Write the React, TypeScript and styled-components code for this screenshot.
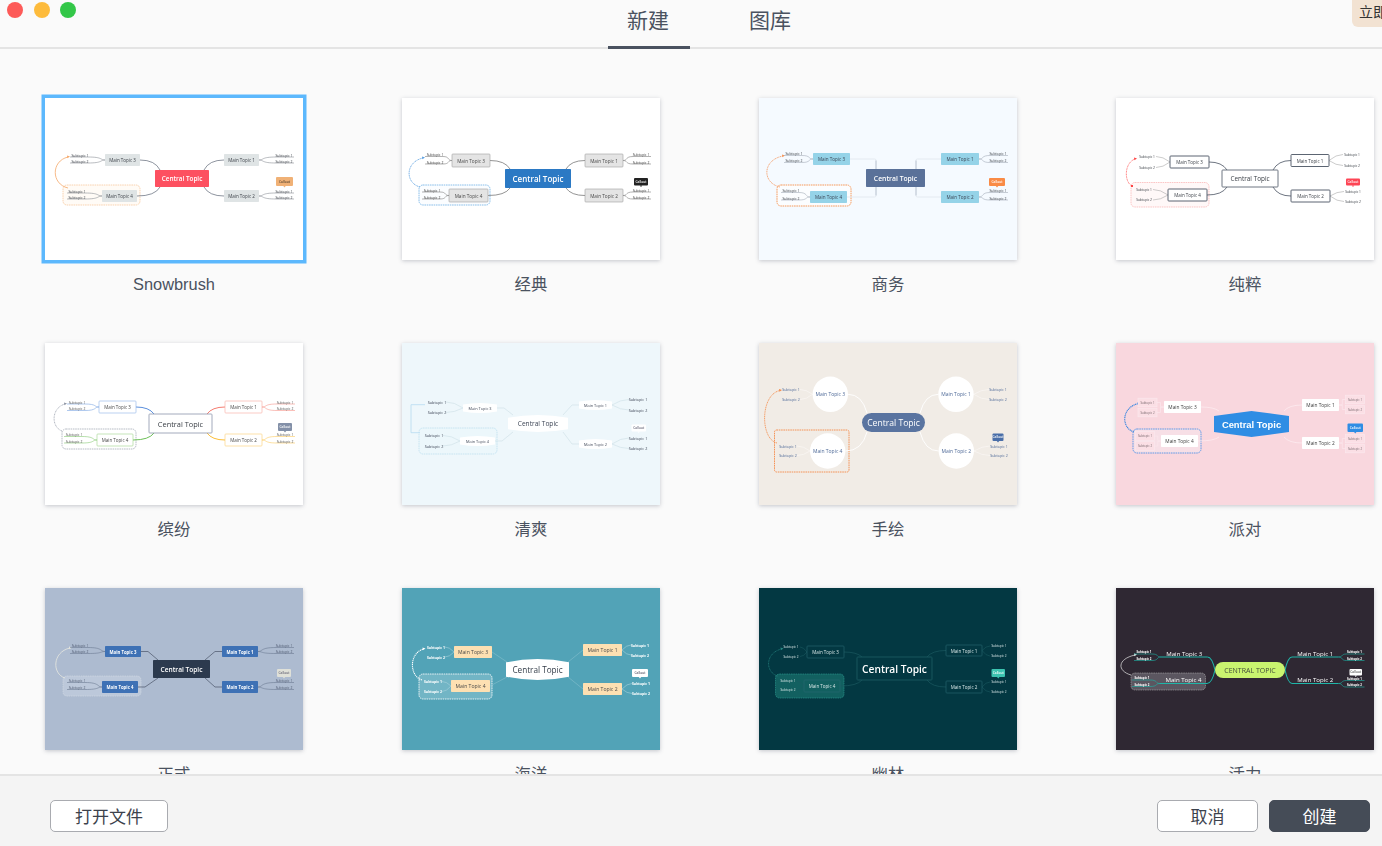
import * as React from 'react';
import styled, { createGlobalStyle } from 'styled-components';

type Box = [number, number, number, number];
type Paint = string | string[];
type ShapeKind = 'rect' | 'pill' | 'lens' | 'hex' | 'circle' | 'underline';
type BranchKind = 'curve' | 'elbow' | 'angular' | 'straight' | 'sweep';
type SubKind = 'line' | 'plain' | 'box';

interface MapTheme {
  name: string;
  bg: string;
  selected?: boolean;
  label?: string;
  central: Box;
  centralShape: ShapeKind;
  centralFill: string;
  centralStroke?: string;
  centralColor: string;
  centralSize: number;
  centralWeight?: number;
  centralFont?: string;
  mains: Box[];
  mainShape: ShapeKind;
  mainFill: string;
  mainStroke?: Paint;
  mainStrokeWidth?: number;
  mainColor: string;
  mainSize: number;
  mainWeight?: number;
  branch: BranchKind;
  branchColor: Paint;
  branchAccent?: string;
  branchWidth: number;
  subKind: SubKind;
  subX: number[];
  subY: number[][];
  subColor: string;
  subLine: Paint;
  subSize: number;
  subWeight?: number;
  subFill?: string;
  callout: Box;
  calloutFill: string;
  calloutColor: string;
  frame: Box;
  frameFill: string;
  frameStroke: string;
  frameWidth: number;
  rel: number[];
  relColor: string;
  relWidth: number;
  relDash?: string;
  relDot?: boolean;
}

const SANS = '"Open Sans", "Noto Sans", sans-serif';

const themes: MapTheme[] = [
  {
    name: 'Snowbrush', bg: '#fff', selected: true,
    central: [110, 72, 164, 89], centralShape: 'rect', centralFill: '#fd5060', centralColor: '#fff', centralSize: 6.4, centralWeight: 600,
    mains: [[179, 56, 214, 68], [179, 92, 214, 104], [60, 56, 95, 68], [57, 92, 92, 104]],
    mainShape: 'rect', mainFill: '#dfe4e5', mainColor: '#3c4148', mainSize: 4.5,
    branch: 'curve', branchColor: '#5d6675', branchWidth: 0.7,
    subKind: 'line', subX: [239, 239, 35, 32], subY: [[57, 63], [93, 99], [57, 63], [93, 99]],
    subColor: '#3c4148', subLine: '#8a8f96', subSize: 3.5,
    callout: [231, 79, 248, 88], calloutFill: '#f0b176', calloutColor: '#5a4632',
    frame: [18, 87, 95, 107], frameFill: '#fffbf6', frameStroke: '#f8c9a0', frameWidth: 0.8,
    rel: [23, 90, 6, 23, 59], relColor: '#f5a86a', relWidth: 0.8,
  },
  {
    name: '经典', bg: '#fff',
    central: [103, 71, 169, 90], centralShape: 'rect', centralFill: '#2b79c4', centralColor: '#fff', centralSize: 8, centralWeight: 600,
    mains: [[183, 56, 221, 69], [183, 91, 221, 104], [50, 56, 88, 69], [47, 91, 86, 104]],
    mainShape: 'rect', mainFill: '#e4e4e4', mainStroke: '#a0a0a0', mainColor: '#484848', mainSize: 4.7,
    branch: 'curve', branchColor: '#666', branchWidth: 0.7,
    subKind: 'line', subX: [239, 239, 33, 30], subY: [[56.5, 64], [92, 99], [56.5, 64], [92, 99]],
    subColor: '#3c3c3c', subLine: '#808080', subSize: 3.4,
    callout: [232, 80, 246, 87.5], calloutFill: '#222', calloutColor: '#fff',
    frame: [17, 87, 88, 107], frameFill: '#fbfdff', frameStroke: '#7db8e8', frameWidth: 0.9,
    rel: [18, 89, 3, 21, 60], relColor: '#5a9fe0', relWidth: 0.8, relDash: '1.2 0.6',
  },
  {
    name: '商务', bg: '#f5faff',
    central: [107, 71, 166, 89], centralShape: 'rect', centralFill: '#5a7199', centralColor: '#fff', centralSize: 6.8, centralWeight: 600,
    mains: [[182, 55, 220, 67], [182, 93, 220, 105], [54, 55, 91, 67], [51, 93, 88, 105]],
    mainShape: 'rect', mainFill: '#95d3e8', mainColor: '#3c4656', mainSize: 4.6,
    branch: 'elbow', branchColor: '#dfe6ee', branchAccent: '#a3aebf', branchWidth: 0.8,
    subKind: 'line', subX: [239, 239, 35, 32], subY: [[55.5, 62.5], [92.5, 100], [55.5, 62.5], [92.5, 100]],
    subColor: '#3c4148', subLine: '#a4acb9', subSize: 3.5,
    callout: [230, 80, 246, 88], calloutFill: '#f98b46', calloutColor: '#fff',
    frame: [18, 87, 92, 108], frameFill: '#fbfdff', frameStroke: '#f59a5c', frameWidth: 1,
    rel: [21, 89, 3, 24, 58], relColor: '#f5965a', relWidth: 0.8, relDash: '1.2 0.6',
  },
  {
    name: '纯粹', bg: '#fff',
    central: [106, 72, 162, 89], centralShape: 'rect', centralFill: '#fff', centralStroke: '#5d6675', centralColor: '#3c4148', centralSize: 6.4,
    mains: [[175, 56.5, 213, 68.5], [175, 92, 214, 104], [54, 58, 93, 70], [52, 91, 91, 103]],
    mainShape: 'rect', mainFill: '#fff', mainStroke: '#4a5362', mainStrokeWidth: 0.9, mainColor: '#3c4148', mainSize: 4.5,
    branch: 'curve', branchColor: '#4a5362', branchWidth: 0.8,
    subKind: 'plain', subX: [236, 237, 31, 28], subY: [[56.5, 67.5], [93.5, 103.5], [58.5, 69.5], [91.5, 102]],
    subColor: '#3c4148', subLine: '#aaa', subSize: 3.2,
    callout: [230, 80.5, 244, 87.5], calloutFill: '#fd4555', calloutColor: '#fff',
    frame: [15, 84.5, 93, 109], frameFill: '#fff8f8', frameStroke: '#fbb0b0', frameWidth: 0.7,
    rel: [16, 88, 8, 19, 61], relColor: '#f44', relWidth: 0.7, relDash: '1 0.6', relDot: true,
  },
  {
    name: '缤纷', bg: '#fff',
    central: [104, 71, 167, 90], centralShape: 'rect', centralFill: '#fff', centralStroke: '#98a0b4', centralColor: '#3c4148', centralSize: 7.4,
    mains: [[180, 58, 217, 70], [180, 91, 217, 103], [54, 58, 91, 70], [52, 91, 88, 103]],
    mainShape: 'rect', mainFill: '#fff', mainStroke: ['#f9a9a0', '#fbcf70', '#8eb4e8', '#9ed48a'], mainColor: '#484848', mainSize: 4.5,
    branch: 'curve', branchColor: ['#f47c70', '#fbbe3a', '#5b8fdc', '#6cbf57'], branchWidth: 1,
    subKind: 'line', subX: [240, 240, 32, 29], subY: [[59, 65.5], [91.5, 98], [59, 65.5], [91.5, 98]],
    subColor: '#555', subLine: ['#f6958b', '#fbcb5f', '#7ba5e3', '#86c974'], subSize: 3.4,
    callout: [233, 80, 247, 88], calloutFill: '#8390a8', calloutColor: '#fff',
    frame: [17, 86, 91, 106], frameFill: '#fff', frameStroke: '#9aa0ad', frameWidth: 0.7,
    rel: [17, 88, 6, 20, 61], relColor: '#8e95a3', relWidth: 0.7, relDash: '1 0.6',
  },
  {
    name: '清爽', bg: '#eef7fb',
    central: [106, 72, 166, 89], centralShape: 'lens', centralFill: '#fff', centralColor: '#3e4656', centralSize: 6.6,
    mains: [[177, 57, 210, 67], [177, 96, 210, 106], [61, 60, 95, 70], [58, 93, 93, 103]],
    mainShape: 'lens', mainFill: '#fff', mainColor: '#3e4656', mainSize: 3.9,
    branch: 'angular', branchColor: '#cddfe5', branchWidth: 0.6,
    subKind: 'plain', subX: [236, 236, 35, 32], subY: [[56.5, 67], [95, 105.5], [59, 69.5], [92.5, 103]],
    subColor: '#3e4656', subLine: '#cddfe5', subSize: 3.8,
    callout: [229.5, 81.5, 244, 88.5], calloutFill: '#fff', calloutColor: '#667',
    frame: [17, 85, 95, 111], frameFill: '#ecf7fb', frameStroke: '#b8ddee', frameWidth: 0.7,
    rel: [], relColor: '#b5daf0', relWidth: 0.8,
  },
  {
    name: '手绘', bg: '#f1ece6',
    central: [103, 70, 166, 89], centralShape: 'pill', centralFill: '#5a74a0', centralColor: '#fff', centralSize: 8.6, centralWeight: 500,
    mains: [[179.3, 33.6, 214.7, 69], [179.6, 90.3, 215, 125.7], [53.6, 33.6, 89, 69], [51, 90.3, 86.4, 125.7]],
    mainShape: 'circle', mainFill: '#fff', mainColor: '#4f6a98', mainSize: 5,
    branch: 'curve', branchColor: '#fff', branchWidth: 0.9,
    subKind: 'plain', subX: [239, 240, 32, 29], subY: [[46.5, 56.5], [103, 112.5], [46.5, 56.5], [103, 112.5]],
    subColor: '#4f6a98', subLine: '#fbf9f6', subSize: 3.6,
    callout: [233.5, 90.5, 244.5, 98], calloutFill: '#4a6ea8', calloutColor: '#fff',
    frame: [15.5, 87, 90, 129], frameFill: 'none', frameStroke: '#f58a48', frameWidth: 0.9,
    rel: [18, 100, 1, 21, 47.5], relColor: '#f58a48', relWidth: 0.8, relDash: '1.2 0.6',
  },
  {
    name: '派对', bg: '#f9d7de',
    central: [98, 68, 173, 94], centralShape: 'hex', centralFill: '#2f8de4', centralColor: '#fff', centralSize: 9.4, centralWeight: 700, centralFont: '"Liberation Sans", sans-serif',
    mains: [[186, 56, 223, 68], [186, 94, 223, 106], [48, 58, 85, 70], [45, 92, 82, 104]],
    mainShape: 'rect', mainFill: '#fff', mainColor: '#3c3c3c', mainSize: 4.8,
    branch: 'curve', branchColor: '#fdeef2', branchWidth: 0.7,
    subKind: 'box', subX: [239, 239, 31.5, 29], subY: [[56.5, 66.5], [95.5, 105.5], [59.5, 69.5], [93, 103]],
    subColor: '#7a6a70', subLine: '#fbeaee', subSize: 2.9, subFill: '#fbdfe5',
    callout: [231.5, 80.5, 247, 89], calloutFill: '#2f8de4', calloutColor: '#fff',
    frame: [17, 86, 85, 110], frameFill: '#f7dfe6', frameStroke: '#5092e6', frameWidth: 0.9,
    rel: [18, 89, 5, 22.5, 60.5], relColor: '#3585e0', relWidth: 1.1, relDash: '1.2 0.6',
  },
  {
    name: '正式', bg: '#adbbd0',
    central: [108, 72, 165, 90], centralShape: 'rect', centralFill: '#2c3a4e', centralColor: '#fff', centralSize: 6.6, centralWeight: 600,
    mains: [[177, 58, 213, 69], [177, 93, 213, 105], [60, 58, 96, 69], [57, 93, 93, 105]],
    mainShape: 'rect', mainFill: '#3e71b5', mainColor: '#fff', mainSize: 4.3, mainWeight: 700,
    branch: 'angular', branchColor: '#4a5568', branchWidth: 0.7,
    subKind: 'line', subX: [239, 239, 35, 32], subY: [[57.5, 63.5], [92.5, 99.5], [57.5, 63.5], [92.5, 99.5]],
    subColor: '#4f5a70', subLine: '#6b7a92', subSize: 3.4,
    callout: [232, 81, 246, 89], calloutFill: '#dfe0d8', calloutColor: '#667',
    frame: [18, 88, 96, 108], frameFill: '#bcc8da', frameStroke: '#d5dbe4', frameWidth: 0.6,
    rel: [20, 90, 7, 25, 60], relColor: '#e8e8e0', relWidth: 0.8,
  },
  {
    name: '海洋', bg: '#52a3b7',
    central: [104, 71, 167, 92], centralShape: 'lens', centralFill: '#fff', centralColor: '#333c48', centralSize: 8.2,
    mains: [[181, 56, 220, 68], [181, 95, 220, 107], [52, 58, 90, 70], [49, 92, 88, 104]],
    mainShape: 'rect', mainFill: '#fde0b2', mainColor: '#484848', mainSize: 5.1,
    branch: 'straight', branchColor: '#85bfcd', branchWidth: 0.6,
    subKind: 'plain', subX: [238, 239, 34, 31], subY: [[57, 67], [95.5, 105.5], [59, 69], [93.5, 103.5]],
    subColor: '#fff', subLine: '#a8d2dc', subSize: 3.5, subWeight: 700,
    callout: [230, 81, 246, 89], calloutFill: '#fff', calloutColor: '#556',
    frame: [17, 86, 90, 111], frameFill: '#72b5c5', frameStroke: '#fff', frameWidth: 0.8,
    rel: [20, 92, 7, 21.5, 61], relColor: '#fff', relWidth: 1.1, relDash: '1.2 0.7',
  },
  {
    name: '幽林', bg: '#033842',
    central: [98, 69, 173, 92], centralShape: 'rect', centralFill: '#033842', centralStroke: '#1b5960', centralColor: '#fff', centralSize: 10.2, centralWeight: 600,
    mains: [[187, 57, 223, 68], [187, 93, 223, 105], [48, 58, 85, 70], [45, 92, 81, 104]],
    mainShape: 'rect', mainFill: 'none', mainStroke: '#2a6a72', mainColor: '#d8e6e6', mainSize: 4.5,
    branch: 'curve', branchColor: '#1b5960', branchWidth: 0.7,
    subKind: 'plain', subX: [240, 240, 32, 29], subY: [[58, 68], [94, 104], [59, 68.5], [93, 102]],
    subColor: '#d8e6e6', subLine: '#1b5960', subSize: 3.1,
    callout: [232.5, 81, 246, 89], calloutFill: '#3cc4b0', calloutColor: '#fff',
    frame: [16.5, 86, 85, 110], frameFill: '#126060', frameStroke: '#2e9a90', frameWidth: 0.6,
    rel: [18.5, 88, 6, 22.5, 61], relColor: '#2a8a85', relWidth: 0.7, relDash: '1 0.6',
  },
  {
    name: '活力', bg: '#2f2833', label: 'CENTRAL TOPIC',
    central: [99, 74, 169, 90], centralShape: 'pill', centralFill: '#c9f46f', centralColor: '#3f4a3a', centralSize: 7,
    mains: [[176, 61, 222.5, 69], [176, 87, 222.5, 95.5], [45, 61, 91.5, 69], [44, 87, 91, 95.5]],
    mainShape: 'underline', mainFill: 'none', mainStroke: '#1fb5a8', mainColor: '#fff', mainSize: 6.1, mainWeight: 500,
    branch: 'sweep', branchColor: '#1fb5a8', branchWidth: 1.1,
    subKind: 'line', subX: [238.5, 238.5, 28, 26], subY: [[64, 70.5], [90.5, 97], [64, 70.5], [90, 96.5]],
    subColor: '#fff', subLine: '#1fb5a8', subSize: 2.9, subWeight: 700,
    callout: [233.5, 81, 246, 87.5], calloutFill: '#fff', calloutColor: '#555',
    frame: [15, 85, 89.5, 102], frameFill: '#5b5660', frameStroke: '#bbb', frameWidth: 0.5,
    rel: [15, 87, 1, 19, 67], relColor: '#e8e8e8', relWidth: 0.7,
  },
];

const pick = (p: Paint, i: number) => (Array.isArray(p) ? p[i] : p);

const branchPath = (t: MapTheme, i: number) => {
  const [cx1, cy1, cx2, cy2] = t.central;
  const [x1, y1, x2, y2] = t.mains[i];
  const right = i < 2;
  const top = i === 0 || i === 2;
  const dir = right ? 1 : -1;
  const mx = right ? x1 : x2;
  const my = t.mainShape === 'underline' ? y2 : (y1 + y2) / 2;
  const sx = right ? cx2 - 5 : cx1 + 5;
  const sy = top ? cy1 : cy2;
  switch (t.branch) {
    case 'elbow': {
      const ex = right ? cx2 - 9 : cx1 + 10;
      const turn = top ? my + 1.5 : my - 1.5;
      return `M${ex} ${turn} Q${ex} ${my} ${ex + dir * 1.5} ${my} H${mx}`;
    }
    case 'angular':
      return `M${sx} ${sy} L${mx - dir * 7} ${my} H${mx}`;
    case 'straight':
      return `M${right ? cx2 - 1 : cx1 + 1} ${sy + (top ? 3 : -3)} L${mx} ${my}`;
    case 'sweep': {
      const ex = right ? cx2 : cx1;
      return `M${ex} ${(cy1 + cy2) / 2} Q${ex + dir * 3} ${my} ${mx} ${my}`;
    }
    default:
      return `M${sx} ${sy} Q${sx + dir * 5} ${my} ${mx} ${my}`;
  }
};

const accentPath = (t: MapTheme, i: number) => {
  const [cx1, cy1, cx2, cy2] = t.central;
  const [, y1, , y2] = t.mains[i];
  const top = i === 0 || i === 2;
  const my = (y1 + y2) / 2;
  const ex = i < 2 ? cx2 - 9 : cx1 + 10;
  return `M${ex} ${top ? cy1 : cy2} V${top ? my + 1.5 : my - 1.5}`;
};

const subPath = (t: MapTheme, i: number, j: number) => {
  const [x1, y1, x2, y2] = t.mains[i];
  const right = i < 2;
  const dir = right ? 1 : -1;
  const mo = right ? x2 : x1;
  const my = t.mainShape === 'underline' ? y2 : (y1 + y2) / 2;
  const y = t.subY[i][j];
  const cx = t.subX[i];
  if (t.subKind === 'line') {
    const ly = y + 2;
    const inner = cx - dir * 8;
    return `M${mo} ${my} C${mo + dir * 5} ${my} ${mo + dir * 2} ${ly} ${inner} ${ly} H${cx + dir * 10}`;
  }
  if (t.subKind === 'box') {
    const edge = cx - dir * 9.5;
    const mid = (mo + edge) / 2;
    return `M${mo} ${my} H${mid} V${y} H${edge}`;
  }
  const edge = cx - dir * 9;
  return `M${mo} ${my} Q${(mo + edge) / 2} ${y} ${edge} ${y}`;
};

interface ShapeProps {
  kind: ShapeKind;
  box: Box;
  fill: string;
  stroke?: string;
  strokeWidth?: number;
  radius?: number;
}

const Shape = ({ kind, box, fill, stroke, strokeWidth = 0.6, radius = 0.8 }: ShapeProps) => {
  const [x1, y1, x2, y2] = box;
  const w = x2 - x1;
  const h = y2 - y1;
  const mid = (x1 + x2) / 2;
  if (kind === 'lens') {
    const d = `M${x1} ${y1 + h * 0.16} Q${mid} ${y1 - h * 0.16} ${x2} ${y1 + h * 0.16} L${x2} ${y2 - h * 0.16} Q${mid} ${y2 + h * 0.16} ${x1} ${y2 - h * 0.16} Z`;
    return <path d={d} fill={fill} stroke={stroke} strokeWidth={strokeWidth} />;
  }
  if (kind === 'hex') {
    const pts = `${x1},${y1 + h * 0.19} ${mid},${y1} ${x2},${y1 + h * 0.19} ${x2},${y2 - h * 0.19} ${mid},${y2} ${x1},${y2 - h * 0.19}`;
    return <polygon points={pts} fill={fill} />;
  }
  if (kind === 'circle') {
    return <circle cx={mid} cy={(y1 + y2) / 2} r={w / 2} fill={fill} />;
  }
  if (kind === 'underline') {
    return <path d={`M${x1} ${y2} H${x2}`} stroke={stroke} strokeWidth={1} fill="none" />;
  }
  const r = kind === 'pill' ? h / 2 : radius;
  return <rect x={x1} y={y1} width={w} height={h} rx={r} fill={fill} stroke={stroke} strokeWidth={strokeWidth} />;
};

const MindMap = ({ theme: t }: { theme: MapTheme }) => {
  const [cx1, cy1, cx2, cy2] = t.central;
  const [fx1, fy1, fx2, fy2] = t.frame;
  const [kx1, ky1, kx2, ky2] = t.callout;
  const rel = t.rel;
  return (
    <MapSvg viewBox="0 0 258 162">
      <rect x={fx1} y={fy1} width={fx2 - fx1} height={fy2 - fy1} rx={t.name === '手绘' ? 2 : 4} fill={t.frameFill} stroke={t.frameStroke} strokeWidth={t.frameWidth} strokeDasharray="1.6 0.7" />
      {rel.length > 0 ? (
        <>
          <path d={`M${rel[0]} ${rel[1]} C${rel[2]} ${rel[1] - 4} ${rel[2]} ${rel[4] + 4} ${rel[3]} ${rel[4]}`} fill="none" stroke={t.relColor} strokeWidth={t.relWidth} strokeDasharray={t.relDash} />
          <polygon points={`${rel[3] + 2},${rel[4] - 0.4} ${rel[3] - 1},${rel[4] - 1.5} ${rel[3] - 0.6},${rel[4] + 1.3}`} fill={t.relColor} />
          {t.relDot && <rect x={rel[0] - 1} y={rel[1] - 1} width={2} height={2} fill={t.relColor} />}
        </>
      ) : (
        <path d="M23 61.7 H9 V89.7 H18" fill="none" stroke={t.relColor} strokeWidth={t.relWidth} />
      )}
      {t.mains.map((m, i) => (
        <React.Fragment key={i}>
          <path d={branchPath(t, i)} fill="none" stroke={pick(t.branchColor, i)} strokeWidth={t.branchWidth} />
          {t.branchAccent && <path d={accentPath(t, i)} fill="none" stroke={t.branchAccent} strokeWidth={t.branchWidth} />}
        </React.Fragment>
      ))}
      {t.mains.map((m, i) =>
        t.subY[i].map((y, j) => (
          <React.Fragment key={`${i}-${j}`}>
            <path d={subPath(t, i, j)} fill="none" stroke={pick(t.subLine, i)} strokeWidth={0.6} />
            {t.subKind === 'box' && (
              <rect x={t.subX[i] - 9.5} y={y - 4.3} width={19} height={8.6} fill={t.subFill} stroke={pick(t.subLine, i)} strokeWidth={0.6} />
            )}
            <MapText x={t.subX[i]} y={y} fontSize={t.subSize} fontWeight={t.subWeight} fill={t.subColor}>
              Subtopic {j + 1}
            </MapText>
          </React.Fragment>
        )),
      )}
      {t.mains.map((m, i) => (
        <React.Fragment key={i}>
          <Shape
            kind={t.mainShape}
            box={m as Box}
            fill={t.mainFill}
            stroke={t.mainStroke ? pick(t.mainStroke, i) : undefined}
            strokeWidth={t.mainStrokeWidth}
          />
          <MapText
            x={(m[0] + m[2]) / 2}
            y={(m[1] + m[3]) / 2}
            fontSize={t.mainSize}
            fontWeight={t.mainWeight}
            fill={t.mainColor}
          >
            Main Topic {i + 1}
          </MapText>
        </React.Fragment>
      ))}
      <Shape kind={t.centralShape} box={t.central} fill={t.centralFill} stroke={t.centralStroke} strokeWidth={0.9} />
      <MapText
        x={(cx1 + cx2) / 2}
        y={(cy1 + cy2) / 2}
        fontSize={t.centralSize}
        fontWeight={t.centralWeight}
        fill={t.centralColor}
        $family={t.centralFont}
      >
        {t.label || 'Central Topic'}
      </MapText>
      <rect x={kx1} y={ky1} width={kx2 - kx1} height={ky2 - ky1} rx={1} fill={t.calloutFill} />
      <polygon points={`${(kx1 + kx2) / 2 - 1.2},${ky2} ${(kx1 + kx2) / 2 + 1.2},${ky2} ${(kx1 + kx2) / 2},${ky2 + 1.4}`} fill={t.calloutFill} />
      <MapText x={(kx1 + kx2) / 2} y={(ky1 + ky2) / 2} fontSize={3.2} fontWeight={600} fill={t.calloutColor}>
        Callout
      </MapText>
    </MapSvg>
  );
};

const GlobalStyle = createGlobalStyle`
  html, body {
    margin: 0;
    height: 100%;
    overflow: hidden;
    background: #fafafa;
  }
  body {
    font-family: "Liberation Sans", "Noto Sans CJK SC", sans-serif;
  }
`;

const Page = styled.div`
  display: flex;
  flex-direction: column;
  height: 100vh;
  position: relative;
`;

const Header = styled.header`
  flex: none;
  display: flex;
  height: 47px;
  border-bottom: 2px solid #e4e4e4;
`;

const TrafficLights = styled.div`
  display: flex;
  flex: none;
  gap: 10.5px;
  width: 601px;
  padding: 2px 0 0 7px;
`;

const Light = styled.span<{ $color: string }>`
  width: 16px;
  height: 16px;
  border-radius: 50%;
  background: ${(p) => p.$color};
`;

const Tabs = styled.nav`
  display: flex;
  gap: 40px;
`;

const Tab = styled.div<{ $active?: boolean }>`
  width: 82px;
  height: 49px;
  padding-right: 2px;
  line-height: 42px;
  text-align: center;
  font-size: 21px;
  color: #4a5260;
  border-bottom: 3px solid ${(p) => (p.$active ? '#4a5260' : 'transparent')};
  box-sizing: border-box;
`;

const PromoBadge = styled.div`
  position: absolute;
  top: 0;
  right: 0;
  width: 23px;
  height: 27px;
  padding-left: 7px;
  overflow: hidden;
  white-space: nowrap;
  background: #f2e2d2;
  border-bottom-left-radius: 6px;
  font-size: 14px;
  line-height: 25px;
  color: #333;
`;

const Gallery = styled.main`
  flex: 1;
  min-height: 0;
  overflow: hidden;
  display: grid;
  grid-template-columns: repeat(4, 258px);
  grid-auto-rows: 245px;
  column-gap: 99px;
  padding: 49px 0 0 45px;
`;

const Card = styled.div`
  display: flex;
  flex-direction: column;
  align-items: center;
`;

const Thumb = styled.div<{ $bg: string; $selected?: boolean }>`
  width: 258px;
  height: 162px;
  flex: none;
  background: ${(p) => p.$bg};
  box-shadow: ${(p) =>
    p.$selected ? '0 0 0 3.5px #5cb8fd' : '0 1px 4px rgba(60, 70, 90, 0.28)'};
`;

const MapSvg = styled.svg`
  display: block;
  width: 100%;
  height: 100%;
  filter: blur(0.2px);
`;

const MapText = styled.text<{ $family?: string }>`
  font-family: ${(p) => p.$family || SANS};
  text-anchor: middle;
  dominant-baseline: central;
`;

const CardName = styled.div`
  margin-top: 14px;
  font-size: 16.4px;
  line-height: 21px;
  color: #4a5260;
`;

const Footer = styled.footer`
  flex: none;
  display: flex;
  justify-content: space-between;
  box-sizing: border-box;
  height: 72px;
  padding: 24px 12px 0 50px;
  background: #f4f4f4;
  border-top: 2px solid #e4e4e4;
`;

const ActionGroup = styled.div`
  display: flex;
  gap: 11px;
`;

const Button = styled.button<{ $primary?: boolean; $width: number }>`
  width: ${(p) => p.$width}px;
  height: 32px;
  padding: 0 0 2px;
  box-sizing: border-box;
  border-radius: 5px;
  border: 1.5px solid ${(p) => (p.$primary ? '#454c57' : '#a9abb0')};
  background: ${(p) => (p.$primary ? '#454c57' : '#fff')};
  color: ${(p) => (p.$primary ? '#fff' : '#3c424c')};
  font-family: "Noto Sans CJK SC", sans-serif;
  font-size: 17px;
`;

const App: React.FC = () => (
  <Page>
    <GlobalStyle />
    <Header>
      <TrafficLights>
        <Light $color="#fd5a58" />
        <Light $color="#fdbb3c" />
        <Light $color="#33c748" />
      </TrafficLights>
      <Tabs>
        <Tab $active>新建</Tab>
        <Tab>图库</Tab>
      </Tabs>
    </Header>
    <PromoBadge>立即</PromoBadge>
    <Gallery>
      {themes.map((t) => (
        <Card key={t.name}>
          <Thumb $bg={t.bg} $selected={t.selected}>
            <MindMap theme={t} />
          </Thumb>
          <CardName>{t.name}</CardName>
        </Card>
      ))}
    </Gallery>
    <Footer>
      <Button $width={118}>打开文件</Button>
      <ActionGroup>
        <Button $width={101}>取消</Button>
        <Button $width={101} $primary>
          创建
        </Button>
      </ActionGroup>
    </Footer>
  </Page>
);

export default App;
